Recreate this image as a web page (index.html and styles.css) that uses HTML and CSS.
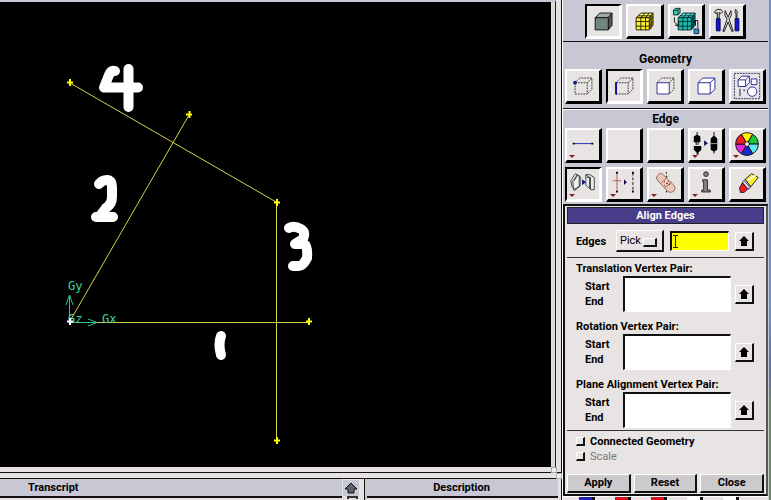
FILE: index.html
```html
<!DOCTYPE html>
<html lang="en">
<head>
<meta charset="utf-8">
<title>Align Edges</title>
<link rel="stylesheet" href="styles.css">
</head>
<body>
<div class="app">
  <main class="workspace">
    <div class="viewport">
      <svg class="scene" width="552" height="464" viewBox="0 3 552 464" role="img" aria-label="Edges 1 to 4">
        <g class="edges">
          <path d="M70 83 277 202.500M276.500 202V440M189 115 70 321"/>
          <path d="M70 322.500H309"/>
        </g>
        <g class="vertices">
          <path d="M67 82.500h6M70 79v7M186 114.500h6M189.500 111v7M274 202.500h6M277 199v7M306 321.500h6M309 318v7M274 440.500h6M277 437v7"/>
        </g>
        <g class="axes">
          <path d="M69.500 320V295M66 305l3.500-10 3.500 10M72 322.500H97M88 319l9 3.500-9 3.500"/>
          <text x="68" y="290">Gy</text>
          <text x="68" y="323">Gz</text>
          <text x="102" y="323">Gx</text>
        </g>
        <path class="origin" d="M67 321.500h6M70 318v7"/>
        <g class="marks">
          <path d="M115 71Q111 70 109 75L104 87.500H138M128.500 69V107"/>
          <path d="M99 184Q102 180 107 180Q112 180 112 187V197Q112 204 106 208L100 216M96 217H113"/>
          <path d="M289 228Q294 225 301 229Q306 232 303 239L295 244H304Q308 246 307 258Q303 266 299 266H293"/>
          <path d="M221 336Q218 344 221 355"/>
        </g>
      </svg>
    </div>
    <div class="sash"></div>
    <div class="logs">
      <section class="log transcript">
        <h2>Transcript</h2>
        <div class="well"></div>
      </section>
      <div class="scroll">
        <button type="button" aria-label="Scroll up"><svg width="14" height="12" viewBox="0 0 14 12"><path d="M7 1 13 7H10V11H4V7H1Z" fill="#566" stroke="#111"/></svg></button>
        <i></i>
      </div>
      <section class="log description">
        <h2>Description</h2>
        <div class="well"></div>
      </section>
    </div>
    <span class="grip grip-a"></span><span class="grip grip-b"></span>
  </main>

  <aside class="panel">
    <nav class="tools modes" aria-label="Operation">
      <button type="button" class="tool on" aria-label="Geometry"><svg viewBox="0 0 34 32"><g stroke="#111"><path d="M8.500 12.500 13.500 7.500H26.500L22.500 12.500Z" fill="#9caaa6"/><path d="M22.500 12.500 26.500 7.500V20.500L22.500 25.500Z" fill="#4a5957"/><path d="M8.500 12.500h14v13h-14Z" fill="#708582"/></g></svg></button>
      <button type="button" class="tool" aria-label="Mesh"><svg viewBox="0 0 34 32"><g stroke="#221"><path d="M8.500 12.500 13.500 7.500H26.500L22.500 12.500Z" fill="#ffff62"/><path d="M22.500 12.500 26.500 7.500V20.500L22.500 25.500Z" fill="#b5a400"/><path d="M8.500 12.500h14v13h-14Z" fill="#ffef20"/><path d="M13.500 26V12.500L18 7.500M18.500 26V12.500L22.500 7.500M8 16.500h14.500l4-5M8 21.500h14.500l4-5M10.500 10.500h14V24" fill="none"/></g></svg></button>
      <button type="button" class="tool" aria-label="Zones"><svg viewBox="0 0 34 32"><g stroke="#033"><path d="M8.500 12.500 13.500 7.500H26.500L22.500 12.500Z" fill="#4ee2cf"/><path d="M22.500 12.500 26.500 7.500V20.500L22.500 25.500Z" fill="#087d78"/><path d="M8.500 12.500h14v13h-14Z" fill="#19bcae"/><path d="M13.500 26V12.500L18 7.500M18.500 26V12.500L22.500 7.500M8 16.500h14.500l4-5M8 21.500h14.500l4-5M10.500 10.500h14V24" fill="none"/><path d="M3.500 4.500h5v5h-5ZM3.500 4.500l2-2h5l-2 2M10.500 2.500v5l-2 2" fill="#37cab8"/></g><path d="M4.500 12v5l4 4M5 20.500h4V17M24 18l3-3v6M26 15.500h3.500v8" fill="none" stroke="#111"/><path d="M25.500 24.500h5v5h-5Z" fill="#2d9ac8" stroke="#024"/></svg></button>
      <button type="button" class="tool" aria-label="Tools"><svg viewBox="0 0 34 32"><path d="M3.500 6q3-4 7-2l2 2-2 2-2-1v6h-2V7L4.500 8ZM26 3.500q3 3 1.500 5v5h-1v-5q-2-2-.5-5" fill="#ddd" stroke="#111"/><path d="M15 5q-2 5 2 9L12.500 27h1.500l4-10 4 10h1.500L19 14q4-4 2-9l-3 7Z" fill="#eee" stroke="#111"/><path d="M5.500 13.500h4v13h-4ZM25.500 13.500h4v13h-4Z" fill="#1616d8" stroke="#005"/></svg></button>
    </nav>

    <section class="group geometry">
      <h2>Geometry</h2>
      <div class="tools">
        <button type="button" class="tool" aria-label="Vertex"><svg viewBox="0 0 34 32"><path d="M8.500 12.500h13v12h-13ZM8.500 12.500l5-5h13v12l-5 5M21.500 12.500l5-5" class="dash"/><circle cx="8.500" cy="12.500" r="2" fill="#002080"/></svg></button>
        <button type="button" class="tool on" aria-label="Edge"><svg viewBox="0 0 34 32"><path d="M8.500 12.500h13v12h-13ZM8.500 12.500l5-5h13v12l-5 5M21.500 12.500l5-5" class="dash"/><path d="M8.500 12v13" stroke="#0b0b99" stroke-width="2"/></svg></button>
        <button type="button" class="tool" aria-label="Face"><svg viewBox="0 0 34 32"><path d="M8.500 12.500l5-5h13v12l-5 5M21.500 12.500l5-5" class="dash"/><path d="M8.500 12.500h13v12h-13Z" class="blue"/></svg></button>
        <button type="button" class="tool" aria-label="Volume"><svg viewBox="0 0 34 32"><path d="M8.500 12.500h13v12h-13ZM8.500 12.500l5-5h13v12l-5 5M21.500 12.500l5-5" class="blue"/></svg></button>
        <button type="button" class="tool" aria-label="Group"><svg viewBox="0 0 34 32"><path d="M3.500 2.500h27v27h-27Z" class="dash navy"/><path d="M7.500 9.500h8v7h-8ZM7.500 9.500l4-4h8v7l-4 4M15.500 9.500l4-4M21.500 8.500h6v6h-6Z" class="blue"/><circle cx="22.500" cy="22" r="5" class="blue"/><path d="M9.500 19v8M13 20.500h2" stroke="#115"/></svg></button>
      </div>
    </section>

    <section class="group edge">
      <h2>Edge</h2>
      <div class="tools grid">
        <button type="button" class="tool more" aria-label="Create edge"><svg viewBox="0 0 34 32"><path d="M7 14.500h20" stroke="#2424b4"/><path d="M6 13.500h2v2H6ZM26 13.500h2v2h-2Z"/></svg></button>
        <button type="button" class="tool" aria-label="Unused"></button>
        <button type="button" class="tool" aria-label="Unused"></button>
        <button type="button" class="tool more" aria-label="Connect"><svg viewBox="0 0 34 32"><path d="M7 2h1v3l3 2v6h-2v3H8v-3H7v3H6v-3H4V7l3-2ZM4 17h8v4l-3 3v2H7v-2l-3-3ZM25 2h1v4l3 3v12l-3 2v2h-1v-2l-3-2V9l3-3Z"/><path d="M15 11l4 3-4 3Z" fill="#115"/><path d="M22 14.500h8" stroke="#aaa"/></svg></button>
        <button type="button" class="tool more" aria-label="Color"><svg viewBox="0 0 34 32"><g stroke="#111"><path d="M17 15 11 4.600A12 12 0 0 1 23 4.600Z" fill="#fff200"/><path d="M17 15 23 4.600A12 12 0 0 1 29 15Z" fill="#19ca32"/><path d="M17 15H29A12 12 0 0 1 23 25.400Z" fill="#5eeaf0"/><path d="M17 15 23 25.400A12 12 0 0 1 11 25.400Z" fill="#122bc9"/><path d="M17 15 11 25.400A12 12 0 0 1 5 15Z" fill="#e923d8"/><path d="M17 15H5A12 12 0 0 1 11 4.600Z" fill="#ee1c25"/><circle cx="17" cy="15" r="2.500" fill="#fff"/></g></svg></button>
        <button type="button" class="tool more on" aria-label="Move, copy or align"><svg viewBox="0 0 34 32"><g fill="#eee" stroke="#344"><path d="M4 12 9 5l4 3v11l-5 4-3-5ZM7 13l4-6M7 22l-1-9 5-7 3 2v10ZM20 6l4 3v12l-4-4ZM20 6h4l5 3v13h-4V9h-4"/></g><path d="M16 11l4 3-4 3Z" fill="#117"/></svg></button>
        <button type="button" class="tool more" aria-label="Split"><svg viewBox="0 0 34 32"><path d="M9.500 5v17M5 12.500h9" stroke="#b45b4b"/><path d="M26.500 4v19" stroke="#111" stroke-dasharray="3 2"/><path d="M8.500 3h2v2h-2ZM8.500 23h2v2h-2ZM25.500 3h2v2h-2ZM25.500 23h2v2h-2Z"/><path d="M17 11l3 3-3 3Z" fill="#115"/></svg></button>
        <button type="button" class="tool more" aria-label="Heal"><svg viewBox="0 0 34 32"><path d="M18.500 3v24" stroke="#111" stroke-dasharray="2 2"/><path d="M9 7q3-4 6-1l12 12q2 3-1 6-3 2-6 0L9 12q-2-2 0-5Z" fill="#f0c7b7" stroke="#86665b"/><path d="M13 15l7-7M17 20l7-6" stroke="#86665b"/><path d="M16 13.500h1M20 13.500h1M18 15.500h2M16 17.500h1M21 16.500h1" stroke="#622"/></svg></button>
        <button type="button" class="tool more" aria-label="Summarize"><svg viewBox="0 0 34 32"><g fill="#888" stroke="#222"><circle cx="17" cy="5.500" r="2.500"/><path d="M13.500 11.500h5v11h3v2h-9v-2h2v-9h-1Z"/></g></svg></button>
        <button type="button" class="tool" aria-label="Delete"><svg viewBox="0 0 34 32"><g stroke="#222"><path d="M15 11 22 5 29 9 21 19Z" fill="#ffec24"/><path d="M18 12 26 7" stroke="#fff" stroke-width="2"/><path d="M12 14 15 11 21 19 18 22Z" fill="#e8e8ee"/><path d="M14 12.500l6 7" stroke="#33a"/><path d="M9 20 12 15 18 21 14 25H10Z" fill="#ed1c24"/></g></svg></button>
      </div>
    </section>

    <form class="form">
      <h1>Align Edges</h1>
      <div class="row pick">
        <label for="edges">Edges</label>
        <span class="option"><select aria-label="Edge selection method"><option>Pick</option><option>List</option></select></span>
        <span class="field"><input id="edges" type="text"><svg width="5" height="13" viewBox="0 0 5 13"><path d="M0 .5h5M0 12.500h5M2.500 0v13" stroke="#222"/></svg></span>
        <button type="button" class="list" aria-label="Edge list"><svg width="10" height="10" viewBox="0 0 10 10"><path d="M5 0l5 5H8v5H2V5H0Z"/></svg></button>
      </div>
      <div class="pairs">
        <fieldset class="pair">
          <legend>Translation Vertex Pair:</legend>
          <div class="row">
            <label for="translation">Start<br>End</label>
            <textarea id="translation"></textarea>
            <button type="button" class="list" aria-label="Translation vertex list"><svg width="10" height="10" viewBox="0 0 10 10"><path d="M5 0l5 5H8v5H2V5H0Z"/></svg></button>
          </div>
        </fieldset>
        <fieldset class="pair">
          <legend>Rotation Vertex Pair:</legend>
          <div class="row">
            <label for="rotation">Start<br>End</label>
            <textarea id="rotation"></textarea>
            <button type="button" class="list" aria-label="Rotation vertex list"><svg width="10" height="10" viewBox="0 0 10 10"><path d="M5 0l5 5H8v5H2V5H0Z"/></svg></button>
          </div>
        </fieldset>
        <fieldset class="pair">
          <legend>Plane Alignment Vertex Pair:</legend>
          <div class="row">
            <label for="plane">Start<br>End</label>
            <textarea id="plane"></textarea>
            <button type="button" class="list" aria-label="Plane vertex list"><svg width="10" height="10" viewBox="0 0 10 10"><path d="M5 0l5 5H8v5H2V5H0Z"/></svg></button>
          </div>
        </fieldset>
      </div>
      <div class="checks">
        <label><input type="checkbox">Connected Geometry</label>
        <label class="off"><input type="checkbox" disabled>Scale</label>
      </div>
      <div class="actions">
        <button type="button">Apply</button>
        <button type="button">Reset</button>
        <button type="button">Close</button>
      </div>
    </form>
    <div class="under"><i class="b"></i><i class="r"></i><i class="r"></i><i class="w"></i><i class="w"></i></div>
  </aside>
  <div class="desktop"></div>
</div>
</body>
</html>
```
FILE: styles.css
```css
* { box-sizing: border-box; }

body {
  margin: 0;
  font: bold 11px/15px Roboto, "Liberation Sans", sans-serif;
  color: #000;
}

h1, h2 { margin: 0; font-size: 11px; line-height: 14px; text-align: center; }
button, input, select, textarea { font: inherit; color: inherit; border-radius: 0; margin: 0; padding: 0; }
svg { display: block; }

.app {
  display: grid;
  grid-template-columns: 1fr 206px 3px;
  height: 100vh;
  overflow: hidden;
  background: #e6e2e2;
}

/* Drawing area */
.workspace { position: relative; display: flex; flex-direction: column; min-width: 0; min-height: 0; border-right: 1px solid #111; }
.viewport {
  flex: 1;
  min-height: 0;
  margin-right: 5px;
  border-top: 2px solid #c8c8d4;
  border-right: 1px solid #222;
  background: linear-gradient(90deg, #000 calc(100% - 4px), #dedada calc(100% - 4px));
  overflow: hidden;
}
.scene { max-width: none; margin-top: 1px; }
.edges { fill: none; stroke: #d2d24c; }
.vertices { fill: none; stroke: #ff0; stroke-width: 2; }
.origin { stroke: #fff; stroke-width: 2; }
.axes { fill: none; stroke: #2fc28c; }
.axes text { fill: #3fd49c; stroke: none; font: 12px "DejaVu Sans Mono", monospace; }
.marks { fill: none; stroke: #fff; stroke-width: 10; stroke-linecap: round; stroke-linejoin: round; }

.sash { height: 12px; border-top: 5px solid #e6e2e2; border-bottom: 1px solid #111; background: linear-gradient(#111 1px, #e6e2e2 1px); }
.logs { display: flex; height: 21px; margin-right: 3px; }
.log { background: #c8c8d4; }
.log h2 { line-height: 17px; }
.transcript { flex: 0 0 342px; }
.transcript h2 { text-align: left; padding-left: 28px; }
.description { flex: 1; border-left: 1px solid #111; }
.well { height: 4px; margin-left: 2px; border-top: 2px solid #111; background: #e6e2e2; }
.transcript .well { margin: 0; }
.scroll { flex: 0 0 22px; padding: 1px 5px 0 1px; background: #e6e2e2; }
.scroll button { display: grid; place-items: center; width: 16px; height: 16px; border: 0; background: #c8c8d4; }
.scroll i { display: block; width: 11px; height: 3px; margin-left: 4px; border: 2px solid #333; border-bottom: 0; }
.grip { position: absolute; width: 6px; height: 6px; border: 1px solid #aaa; background: #eee; }
.grip-a { right: 4px; bottom: 27px; }
.grip-b { right: -1px; bottom: 21px; }

/* Control panel */
.panel { display: flex; flex-direction: column; min-width: 0; background: #c8c8d4; border-left: 1px solid #fff; }
.tools { display: flex; gap: 4px; }
.tool {
  position: relative;
  flex: 1;
  height: 35px;
  border: 2px solid #fff;
  border-right: 3px solid #000;
  border-bottom: 3px solid #000;
  background: #e8e4e4;
}
.tool svg { width: 100%; height: 100%; }
.tool.on { border: 2px solid #000; border-right: 3px solid #fff; border-bottom: 3px solid #fff; }
.more::after { content: ""; position: absolute; left: 2px; bottom: 2px; border: 3px solid transparent; border-top-color: #7c2020; border-bottom: 0; }
.dash { fill: none; stroke: #333; stroke-dasharray: 2 1; }
.navy { stroke: #226; }
.blue { fill: #fff; stroke: #24249c; }

.modes { padding: 4px 22px 2px; border-bottom: 1px solid #111; }
.group { border-bottom: 1px solid #111; }
.group h2 { font-size: 12px; }
.geometry { padding: 10px 2px 4px; }
.geometry h2 { padding-bottom: 2px; line-height: 15px; }
.edge { padding: 0 2px 2px; border-top: 1px solid #fff; }
.edge h2 { line-height: 18px; }
.grid { display: grid; grid-template-columns: repeat(5, 1fr); gap: 4px; }

/* Align form */
.form { border: 2px solid #111; border-top-width: 1px; border-right-color: #555; padding: 1px 2px; background: #e8e4e4; }
.form h1 { border: 1px solid #222; line-height: 15px; color: #fff; background: #483d8b; }
.row { display: grid; align-items: center; }
.pick { grid-template-columns: 34px 48px 1fr 19px; gap: 0 6px; padding: 6px 10px 5px 9px; border-bottom: 1px solid #333; }
.option { position: relative; height: 22px; border: 1px solid #fff; border-right: 2px solid #111; border-bottom: 2px solid #111; }
.option select { display: block; width: 100%; height: 100%; padding-left: 3px; appearance: none; border: 0; background: none; font-weight: normal; font-size: 11px; }
.option::after { content: ""; position: absolute; right: 5px; top: 7px; width: 11px; height: 6px; border: 1px solid #fff; border-right: 2px solid #111; border-bottom: 2px solid #111; pointer-events: none; }
.field { position: relative; min-width: 0; height: 20px; }
.field svg { position: absolute; left: 3px; top: 4px; }
.pick input { display: block; width: 100%; height: 100%; border: 2px solid #111; border-right: 1px solid #fff; border-bottom: 1px solid #fff; background: #ff0; }
.list { display: grid; place-items: center; width: 19px; height: 19px; border: 1px solid #fff; border-right: 2px solid #111; border-bottom: 2px solid #111; background: #e8e4e4; }
.pairs { display: grid; gap: 2px; }
.pair { min-width: 0; margin: 0; padding: 0 10px 0 9px; border: 0; height: 56px; }
.pair legend { padding: 3px 0 0; }
.pair .row { grid-template-columns: 34px 1fr 19px; gap: 0 4px; padding-left: 9px; }
.pair textarea { display: block; width: 100%; height: 36px; resize: none; border: 2px solid #111; border-right: 1px solid #fff; border-bottom: 1px solid #fff; background: #fff; }
.checks { border-top: 1px solid #333; padding: 3px 9px 10px; }
.checks label { display: flex; align-items: center; gap: 5px; }
.checks input { appearance: none; width: 9px; height: 9px; border: 1px solid #fff; border-right: 2px solid #111; border-bottom: 2px solid #111; }
.off { color: #777; font-weight: normal; }
.actions { display: grid; grid-template-columns: repeat(3, 1fr); gap: 3px; }
.actions button { height: 19px; border: 1px solid #fff; border-right: 2px solid #111; border-bottom: 2px solid #111; background: #cccacc; line-height: 14px; }

.under { flex: 1; display: flex; gap: 20px; padding-left: 16px; background: #e8e4e4; border-top: 1px solid #fff; }
.under i { width: 16px; border-right: 3px solid #111; }
.under .b { background: #22b; }
.under .r { background: #d8101c; }
.under .w { background: #fff; }

.desktop { background: linear-gradient(#c8c8d4, #c8c8d4) 0 0 / 1px 100% no-repeat, linear-gradient(#6d93cf 60%, #5a6fa8 75%, #6e8a64 80%); }
```
